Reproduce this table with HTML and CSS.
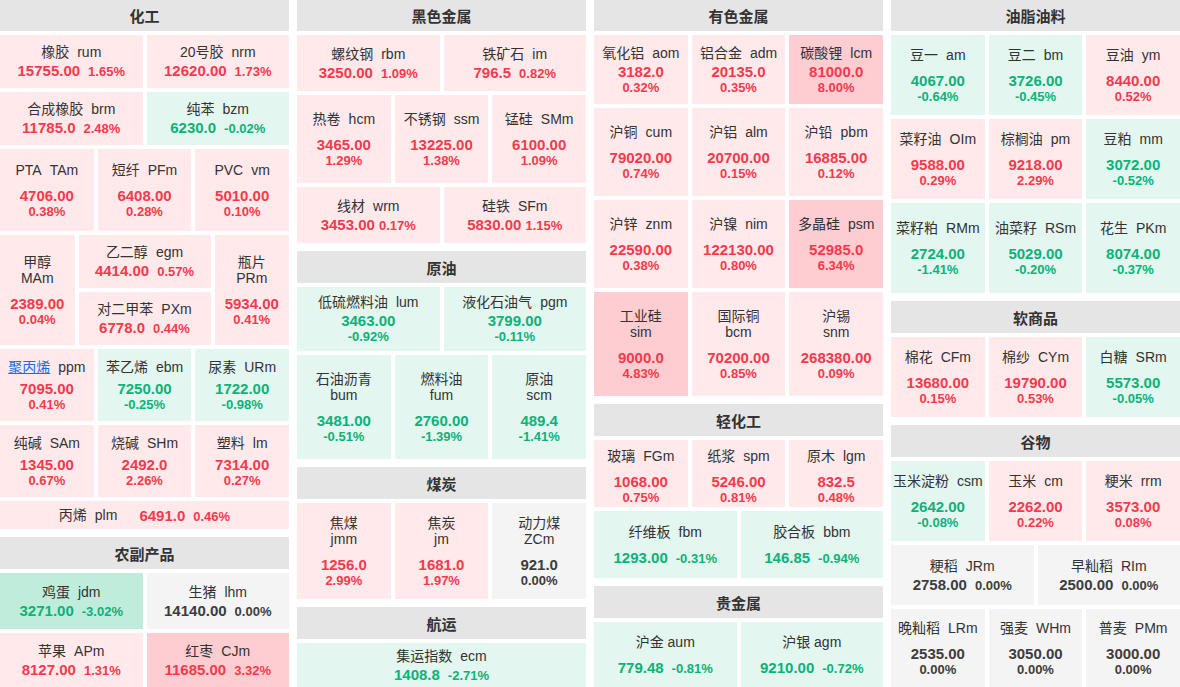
FILE: index.html
```html
<!DOCTYPE html>
<html lang="zh-CN">
<head>
<meta charset="utf-8">
<title>期货行情</title>
<link rel="stylesheet" href="styles.css">
</head>
<body>
<div class="board">
  <!-- Column 1 -->
  <div class="col">
    <div class="sec">
      <div class="hd top">化工</div>
      <div class="row h53">
        <div class="t up"><div class="n">橡胶<span class="c">rum</span></div><div class="v">15755.00<span class="p">1.65%</span></div></div>
        <div class="t up"><div class="n">20号胶<span class="c">nrm</span></div><div class="v">12620.00<span class="p">1.73%</span></div></div>
      </div>
      <div class="row h53">
        <div class="t up"><div class="n">合成橡胶<span class="c">brm</span></div><div class="v">11785.0<span class="p">2.48%</span></div></div>
        <div class="t dn"><div class="n">纯苯<span class="c">bzm</span></div><div class="v">6230.0<span class="p">-0.02%</span></div></div>
      </div>
      <div class="row h82">
        <div class="t up g"><div class="n">PTA<span class="c">TAm</span></div><div class="v">4706.00</div><div class="p">0.38%</div></div>
        <div class="t up g"><div class="n">短纤<span class="c">PFm</span></div><div class="v">6408.00</div><div class="p">0.28%</div></div>
        <div class="t up g"><div class="n">PVC<span class="c">vm</span></div><div class="v">5010.00</div><div class="p">0.10%</div></div>
      </div>
      <div class="row h110">
        <div class="t up g w80"><div class="n">甲醇<br>MAm</div><div class="v">2389.00</div><div class="p">0.04%</div></div>
        <div class="stack w132">
          <div class="t up"><div class="n">乙二醇<span class="c">egm</span></div><div class="v">4414.00<span class="p">0.57%</span></div></div>
          <div class="t up"><div class="n">对二甲苯<span class="c">PXm</span></div><div class="v">6778.0<span class="p">0.44%</span></div></div>
        </div>
        <div class="t up g w69"><div class="n">瓶片<br>PRm</div><div class="v">5934.00</div><div class="p">0.41%</div></div>
      </div>
      <div class="row h72">
        <div class="t up m"><div class="n"><a class="lk" href="#">聚丙烯</a><span class="c">ppm</span></div><div class="v">7095.00</div><div class="p">0.41%</div></div>
        <div class="t dn m"><div class="n">苯乙烯<span class="c">ebm</span></div><div class="v">7250.00</div><div class="p">-0.25%</div></div>
        <div class="t dn m"><div class="n">尿素<span class="c">URm</span></div><div class="v">1722.00</div><div class="p">-0.98%</div></div>
      </div>
      <div class="row h72">
        <div class="t up m"><div class="n">纯碱<span class="c">SAm</span></div><div class="v">1345.00</div><div class="p">0.67%</div></div>
        <div class="t up m"><div class="n">烧碱<span class="c">SHm</span></div><div class="v">2492.0</div><div class="p">2.26%</div></div>
        <div class="t up m"><div class="n">塑料<span class="c">lm</span></div><div class="v">7314.00</div><div class="p">0.27%</div></div>
      </div>
      <div class="row h28">
        <div class="t up line"><div class="n">丙烯<span class="c">plm</span></div><div class="v">6491.0<span class="p">0.46%</span></div></div>
      </div>
    </div>
    <div class="sec">
      <div class="hd">农副产品</div>
      <div class="row h56">
        <div class="t dn2"><div class="n">鸡蛋<span class="c">jdm</span></div><div class="v">3271.00<span class="p">-3.02%</span></div></div>
        <div class="t fl"><div class="n">生猪<span class="c">lhm</span></div><div class="v">14140.00<span class="p">0.00%</span></div></div>
      </div>
      <div class="row h54">
        <div class="t up"><div class="n">苹果<span class="c">APm</span></div><div class="v">8127.00<span class="p">1.31%</span></div></div>
        <div class="t up2"><div class="n">红枣<span class="c">CJm</span></div><div class="v">11685.00<span class="p">3.32%</span></div></div>
      </div>
    </div>
  </div>

  <!-- Column 2 -->
  <div class="col">
    <div class="sec">
      <div class="hd top">黑色金属</div>
      <div class="row h56">
        <div class="t up"><div class="n">螺纹钢<span class="c">rbm</span></div><div class="v">3250.00<span class="p">1.09%</span></div></div>
        <div class="t up"><div class="n">铁矿石<span class="c">im</span></div><div class="v">796.5<span class="p">0.82%</span></div></div>
      </div>
      <div class="row h88">
        <div class="t up g"><div class="n">热卷<span class="c">hcm</span></div><div class="v">3465.00</div><div class="p">1.29%</div></div>
        <div class="t up g"><div class="n">不锈钢<span class="c">ssm</span></div><div class="v">13225.00</div><div class="p">1.38%</div></div>
        <div class="t up g"><div class="n">锰硅<span class="c">SMm</span></div><div class="v">6100.00</div><div class="p">1.09%</div></div>
      </div>
      <div class="row h56">
        <div class="t up tight"><div class="n">线材<span class="c">wrm</span></div><div class="v">3453.00<span class="p">0.17%</span></div></div>
        <div class="t up tight"><div class="n">硅铁<span class="c">SFm</span></div><div class="v">5830.00<span class="p">1.15%</span></div></div>
      </div>
    </div>
    <div class="sec">
      <div class="hd">原油</div>
      <div class="row h64">
        <div class="t dn"><div class="n">低硫燃料油<span class="c">lum</span></div><div class="v">3463.00</div><div class="p">-0.92%</div></div>
        <div class="t dn"><div class="n">液化石油气<span class="c">pgm</span></div><div class="v">3799.00</div><div class="p">-0.11%</div></div>
      </div>
      <div class="row h104">
        <div class="t dn g"><div class="n">石油沥青<br>bum</div><div class="v">3481.00</div><div class="p">-0.51%</div></div>
        <div class="t dn g"><div class="n">燃料油<br>fum</div><div class="v">2760.00</div><div class="p">-1.39%</div></div>
        <div class="t dn g"><div class="n">原油<br>scm</div><div class="v">489.4</div><div class="p">-1.41%</div></div>
      </div>
    </div>
    <div class="sec">
      <div class="hd">煤炭</div>
      <div class="row h96">
        <div class="t up g"><div class="n">焦煤<br>jmm</div><div class="v">1256.0</div><div class="p">2.99%</div></div>
        <div class="t up g"><div class="n">焦炭<br>jm</div><div class="v">1681.0</div><div class="p">1.97%</div></div>
        <div class="t fl g"><div class="n">动力煤<br>ZCm</div><div class="v">921.0</div><div class="p">0.00%</div></div>
      </div>
    </div>
    <div class="sec">
      <div class="hd">航运</div>
      <div class="row h44">
        <div class="t dn"><div class="n">集运指数<span class="c">ecm</span></div><div class="v">1408.8<span class="p">-2.71%</span></div></div>
      </div>
    </div>
  </div>

  <!-- Column 3 -->
  <div class="col">
    <div class="sec">
      <div class="hd top">有色金属</div>
      <div class="row h69">
        <div class="t up"><div class="n">氧化铝<span class="c">aom</span></div><div class="v">3182.0</div><div class="p">0.32%</div></div>
        <div class="t up"><div class="n">铝合金<span class="c">adm</span></div><div class="v">20135.0</div><div class="p">0.35%</div></div>
        <div class="t up2"><div class="n">碳酸锂<span class="c">lcm</span></div><div class="v">81000.0</div><div class="p">8.00%</div></div>
      </div>
      <div class="row h88">
        <div class="t up g"><div class="n">沪铜<span class="c">cum</span></div><div class="v">79020.00</div><div class="p">0.74%</div></div>
        <div class="t up g"><div class="n">沪铝<span class="c">alm</span></div><div class="v">20700.00</div><div class="p">0.15%</div></div>
        <div class="t up g"><div class="n">沪铅<span class="c">pbm</span></div><div class="v">16885.00</div><div class="p">0.12%</div></div>
      </div>
      <div class="row h88">
        <div class="t up g"><div class="n">沪锌<span class="c">znm</span></div><div class="v">22590.00</div><div class="p">0.38%</div></div>
        <div class="t up g"><div class="n">沪镍<span class="c">nim</span></div><div class="v">122130.00</div><div class="p">0.80%</div></div>
        <div class="t up2 g"><div class="n">多晶硅<span class="c">psm</span></div><div class="v">52985.0</div><div class="p">6.34%</div></div>
      </div>
      <div class="row h104">
        <div class="t up2 g"><div class="n">工业硅<br>sim</div><div class="v">9000.0</div><div class="p">4.83%</div></div>
        <div class="t up g"><div class="n">国际铜<br>bcm</div><div class="v">70200.00</div><div class="p">0.85%</div></div>
        <div class="t up g"><div class="n">沪锡<br>snm</div><div class="v">268380.00</div><div class="p">0.09%</div></div>
      </div>
    </div>
    <div class="sec">
      <div class="hd">轻化工</div>
      <div class="row h67">
        <div class="t up g low"><div class="n">玻璃<span class="c">FGm</span></div><div class="v">1068.00</div><div class="p">0.75%</div></div>
        <div class="t up g low"><div class="n">纸浆<span class="c">spm</span></div><div class="v">5246.00</div><div class="p">0.81%</div></div>
        <div class="t up g low"><div class="n">原木<span class="c">lgm</span></div><div class="v">832.5</div><div class="p">0.48%</div></div>
      </div>
      <div class="row h67">
        <div class="t dn g"><div class="n">纤维板<span class="c">fbm</span></div><div class="v">1293.00<span class="p">-0.31%</span></div></div>
        <div class="t dn g"><div class="n">胶合板<span class="c">bbm</span></div><div class="v">146.85<span class="p">-0.94%</span></div></div>
      </div>
    </div>
    <div class="sec">
      <div class="hd">贵金属</div>
      <div class="row h65">
        <div class="t dn g"><div class="n">沪金 aum</div><div class="v">779.48<span class="p">-0.81%</span></div></div>
        <div class="t dn g"><div class="n">沪银 agm</div><div class="v">9210.00<span class="p">-0.72%</span></div></div>
      </div>
    </div>
  </div>

  <!-- Column 4 -->
  <div class="col">
    <div class="sec">
      <div class="hd top">油脂油料</div>
      <div class="row h80">
        <div class="t dn g"><div class="n">豆一<span class="c">am</span></div><div class="v">4067.00</div><div class="p">-0.64%</div></div>
        <div class="t dn g"><div class="n">豆二<span class="c">bm</span></div><div class="v">3726.00</div><div class="p">-0.45%</div></div>
        <div class="t up g"><div class="n">豆油<span class="c">ym</span></div><div class="v">8440.00</div><div class="p">0.52%</div></div>
      </div>
      <div class="row h80">
        <div class="t up g"><div class="n">菜籽油<span class="c">OIm</span></div><div class="v">9588.00</div><div class="p">0.29%</div></div>
        <div class="t up g"><div class="n">棕榈油<span class="c">pm</span></div><div class="v">9218.00</div><div class="p">2.29%</div></div>
        <div class="t dn g"><div class="n">豆粕<span class="c">mm</span></div><div class="v">3072.00</div><div class="p">-0.52%</div></div>
      </div>
      <div class="row h90">
        <div class="t dn g"><div class="n">菜籽粕<span class="c">RMm</span></div><div class="v">2724.00</div><div class="p">-1.41%</div></div>
        <div class="t dn g"><div class="n">油菜籽<span class="c">RSm</span></div><div class="v">5029.00</div><div class="p">-0.20%</div></div>
        <div class="t dn g"><div class="n">花生<span class="c">PKm</span></div><div class="v">8074.00</div><div class="p">-0.37%</div></div>
      </div>
    </div>
    <div class="sec">
      <div class="hd">软商品</div>
      <div class="row h80">
        <div class="t up g"><div class="n">棉花<span class="c">CFm</span></div><div class="v">13680.00</div><div class="p">0.15%</div></div>
        <div class="t up g"><div class="n">棉纱<span class="c">CYm</span></div><div class="v">19790.00</div><div class="p">0.53%</div></div>
        <div class="t dn g"><div class="n">白糖<span class="c">SRm</span></div><div class="v">5573.00</div><div class="p">-0.05%</div></div>
      </div>
    </div>
    <div class="sec">
      <div class="hd">谷物</div>
      <div class="row h80">
        <div class="t dn g"><div class="n">玉米淀粉<span class="c">csm</span></div><div class="v">2642.00</div><div class="p">-0.08%</div></div>
        <div class="t up g"><div class="n">玉米<span class="c">cm</span></div><div class="v">2262.00</div><div class="p">0.22%</div></div>
        <div class="t up g"><div class="n">粳米<span class="c">rrm</span></div><div class="v">3573.00</div><div class="p">0.08%</div></div>
      </div>
      <div class="row h60">
        <div class="t fl"><div class="n">粳稻<span class="c">JRm</span></div><div class="v">2758.00<span class="p">0.00%</span></div></div>
        <div class="t fl"><div class="n">早籼稻<span class="c">RIm</span></div><div class="v">2500.00<span class="p">0.00%</span></div></div>
      </div>
      <div class="row h78">
        <div class="t fl g"><div class="n">晚籼稻<span class="c">LRm</span></div><div class="v">2535.00</div><div class="p">0.00%</div></div>
        <div class="t fl g"><div class="n">强麦<span class="c">WHm</span></div><div class="v">3050.00</div><div class="p">0.00%</div></div>
        <div class="t fl g"><div class="n">普麦<span class="c">PMm</span></div><div class="v">3000.00</div><div class="p">0.00%</div></div>
      </div>
    </div>
  </div>
</div>
</body>
</html>
```

FILE: styles.css
```css
html, body {
  margin: 0;
  padding: 0;
  background: #ffffff;
}
body {
  font-family: "Liberation Sans", "Noto Sans CJK SC", sans-serif;
  color: #333333;
}
.board {
  width: 1180px;
  height: 687px;
  overflow: hidden;
  display: grid;
  grid-template-columns: repeat(4, 1fr);
  column-gap: 8px;
  align-items: start;
}
.col {
  display: flex;
  flex-direction: column;
  gap: 8px;
}
.sec {
  display: flex;
  flex-direction: column;
  gap: 4px;
}
.hd {
  height: 32px;
  background: #e5e5e5;
  display: flex;
  align-items: center;
  justify-content: center;
  font-weight: 700;
  font-size: 15px;
  color: #333333;
}
.hd.top { height: 31px; }

.row { display: flex; gap: 4px; }
.h28 { height: 28px; }
.h44 { height: 44px; }
.h53 { height: 53px; }
.h54 { height: 54px; }
.h56 { height: 56px; }
.h60 { height: 60px; }
.h64 { height: 64px; }
.h65 { height: 65px; }
.h67 { height: 67px; }
.h69 { height: 69px; }
.h72 { height: 72px; }
.h78 { height: 78px; }
.h80 { height: 80px; }
.h82 { height: 82px; }
.h88 { height: 88px; }
.h90 { height: 90px; }
.h96 { height: 96px; }
.h104 { height: 104px; }
.h110 { height: 110px; }

.stack {
  display: flex;
  flex-direction: column;
  gap: 4px;
}
.stack > .t { flex: 1; }
.w80 { flex: 0 0 80px; }
.w132 { flex: 0 0 132px; }
.w69 { flex: 0 0 69px; }

.t {
  flex: 1;
  min-width: 0;
  display: flex;
  flex-direction: column;
  align-items: center;
  justify-content: center;
  text-align: center;
  white-space: nowrap;
}
.t.line { flex-direction: row; }
.t.line .n { margin: 0 22px 0 0; }
.t.low { padding-top: 6px; box-sizing: border-box; }

.up  { background: #ffe9eb; }
.up2 { background: #fdcdd1; }
.dn  { background: #e3f6ef; }
.dn2 { background: #c0ecdc; }
.fl  { background: #f4f4f4; }

.n {
  font-size: 14px;
  line-height: 16px;
  margin-bottom: 2px;
  color: #333333;
}
.g .n { margin-bottom: 9px; }
.m .n { margin-bottom: 5px; }
.c { margin-left: 8px; }
.lk { color: #1a6fe0; text-decoration: underline; }

.v {
  font-weight: 700;
  font-size: 15px;
  line-height: 17px;
}
.p {
  font-weight: 700;
  font-size: 13px;
  line-height: 15px;
}
.v .p { margin-left: 8px; }
.tight .v .p { margin-left: 4px; }

.up .v, .up .p, .up2 .v, .up2 .p { color: #f43a4d; }
.dn .v, .dn .p, .dn2 .v, .dn2 .p { color: #0bb27a; }
.fl .v, .fl .p { color: #3d3d3d; }
```
